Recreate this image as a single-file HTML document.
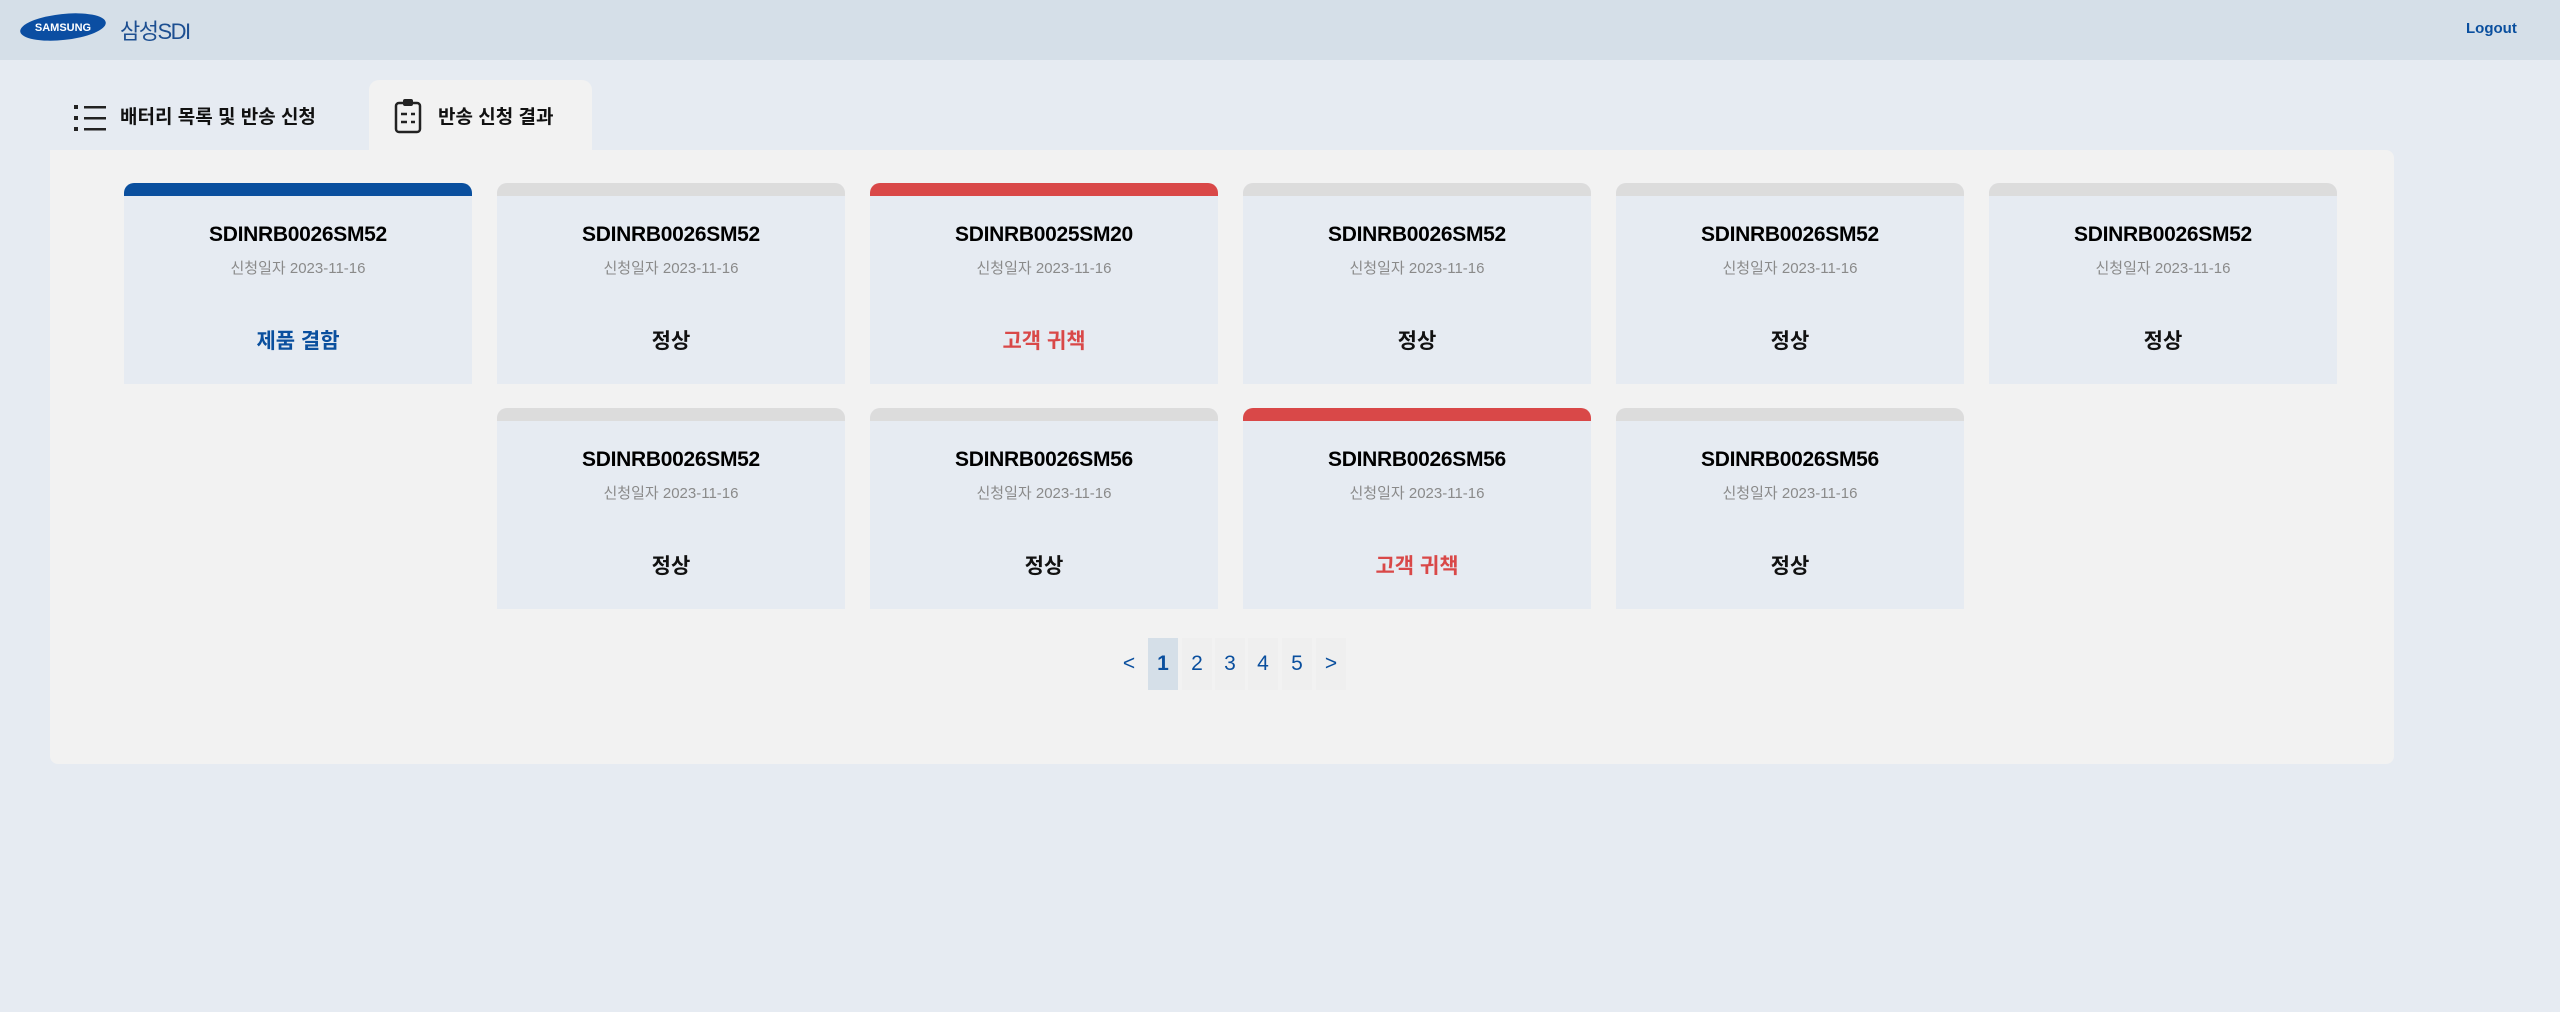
<!DOCTYPE html>
<html><head><meta charset="utf-8"><style>
*{margin:0;padding:0;box-sizing:border-box}
body{width:2560px;height:1012px;background:#e6ebf2;font-family:"Liberation Sans","Noto Sans CJK KR",sans-serif;position:relative;overflow:hidden}
.hdr{position:absolute;left:0;top:0;width:2560px;height:60px;background:#d5dfe8}
.logo{position:absolute;left:20px;top:12px;width:86px;height:30px}
.sdi{position:absolute;left:120px;top:14px;font-size:22px;color:#1d4f91;letter-spacing:-1.5px}
.logout{position:absolute;left:2466px;top:20px;font-size:15px;font-weight:bold;color:#0a4f9e}
.tab{position:absolute;top:80px;height:70px;font-size:19px;font-weight:bold;color:#111}
.tab.act{left:369px;width:223px;background:#f2f2f2;border-radius:10px 10px 0 0}
.panel{position:absolute;left:50px;top:150px;width:2344px;height:614px;background:#f2f2f2;border-radius:0 8px 8px 8px}
.card{position:absolute;width:348px;height:201px;background:#e6ebf2;border-radius:10px 10px 0 0;overflow:hidden;text-align:center}
.card .bar{height:13px;background:#dcdcdc}
.card.b .bar{background:#0a4f9e}.card.r .bar{background:#d94848}
.card .t{position:absolute;top:40px;width:100%;font-size:21px;font-weight:bold;color:#000;letter-spacing:-0.3px}
.card .d{position:absolute;top:74px;width:100%;font-size:15px;color:#8a8a8a}
.card .s{position:absolute;top:142px;width:100%;font-size:21px;font-weight:bold;color:#111}
.card.b .s{color:#0a4f9e}.card.r .s{color:#d94848}
.pg{position:absolute;top:638px;height:52px;width:30px;font-size:21px;color:#0a4f9e;text-align:center;line-height:52px;background:#efefef}
</style></head><body>
<div class="hdr">
<svg class="logo" viewBox="0 0 86 30"><ellipse cx="43" cy="15" rx="43" ry="13" transform="rotate(-6 43 15)" fill="#0b4ea2"/><text x="43" y="19" font-size="11" font-weight="bold" fill="#fff" text-anchor="middle" font-family="Liberation Sans">SAMSUNG</text></svg>
<div class="sdi">삼성SDI</div>
<div class="logout">Logout</div>
</div>
<div class="tab" style="left:74px;width:290px">
<svg style="position:absolute;left:0;top:25px" width="34" height="26" viewBox="0 0 34 26"><rect x="0" y="0" width="4" height="4" fill="#222"/><rect x="0" y="11" width="4" height="4" fill="#222"/><rect x="0" y="22" width="4" height="4" fill="#222"/><rect x="10" y="1" width="22" height="2.5" fill="#222"/><rect x="10" y="12" width="22" height="2.5" fill="#222"/><rect x="10" y="23" width="22" height="2.5" fill="#222"/></svg>
<span style="position:absolute;left:46px;top:22px">배터리 목록 및 반송 신청</span></div>
<div class="tab act">
<svg style="position:absolute;left:25px;top:18px" width="28" height="36" viewBox="0 0 28 36"><rect x="2" y="5" width="24" height="29" rx="3" fill="none" stroke="#222" stroke-width="2.5"/><rect x="9" y="1" width="10" height="7" rx="2" fill="#222"/><path d="M7 16h6M7 24h6M17 16h4M17 24h4" stroke="#222" stroke-width="2.5"/></svg>
<span style="position:absolute;left:69px;top:22px">반송 신청 결과</span></div>
<div class="panel"></div>

<div class="card b" style="left:124px;top:183px"><div class="bar"></div><div class="t">SDINRB0026SM52</div><div class="d">신청일자 2023-11-16</div><div class="s">제품 결함</div></div>
<div class="card" style="left:497px;top:183px"><div class="bar"></div><div class="t">SDINRB0026SM52</div><div class="d">신청일자 2023-11-16</div><div class="s">정상</div></div>
<div class="card r" style="left:870px;top:183px"><div class="bar"></div><div class="t">SDINRB0025SM20</div><div class="d">신청일자 2023-11-16</div><div class="s">고객 귀책</div></div>
<div class="card" style="left:1243px;top:183px"><div class="bar"></div><div class="t">SDINRB0026SM52</div><div class="d">신청일자 2023-11-16</div><div class="s">정상</div></div>
<div class="card" style="left:1616px;top:183px"><div class="bar"></div><div class="t">SDINRB0026SM52</div><div class="d">신청일자 2023-11-16</div><div class="s">정상</div></div>
<div class="card" style="left:1989px;top:183px"><div class="bar"></div><div class="t">SDINRB0026SM52</div><div class="d">신청일자 2023-11-16</div><div class="s">정상</div></div>

<div class="card" style="left:497px;top:408px"><div class="bar"></div><div class="t">SDINRB0026SM52</div><div class="d">신청일자 2023-11-16</div><div class="s">정상</div></div>
<div class="card" style="left:870px;top:408px"><div class="bar"></div><div class="t">SDINRB0026SM56</div><div class="d">신청일자 2023-11-16</div><div class="s">정상</div></div>
<div class="card r" style="left:1243px;top:408px"><div class="bar"></div><div class="t">SDINRB0026SM56</div><div class="d">신청일자 2023-11-16</div><div class="s">고객 귀책</div></div>
<div class="card" style="left:1616px;top:408px"><div class="bar"></div><div class="t">SDINRB0026SM56</div><div class="d">신청일자 2023-11-16</div><div class="s">정상</div></div>

<div class="pg" style="left:1114px;background:none">&lt;</div>
<div class="pg" style="left:1148px;background:#d5dfe8;font-weight:bold">1</div>
<div class="pg" style="left:1182px">2</div>
<div class="pg" style="left:1215px">3</div>
<div class="pg" style="left:1248px">4</div>
<div class="pg" style="left:1282px">5</div>
<div class="pg" style="left:1316px">&gt;</div>
</body></html>
